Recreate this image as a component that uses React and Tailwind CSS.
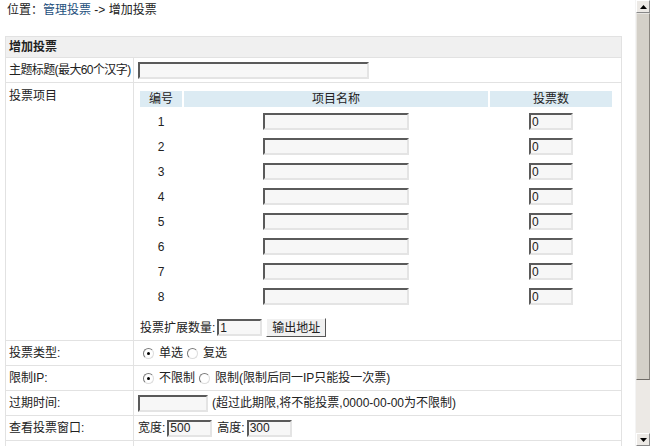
import React from "react";

const inputCls =
  "h-[17px] bg-[#f7f7f7] border-2 border-t-[#5a5a5a] border-l-[#5a5a5a] border-r-[#e4e4e4] border-b-[#e4e4e4] text-[12px] leading-[13px] px-[1px] outline-none";

const Radio = ({ checked }) => (
  <span className="inline-flex w-[11px] h-[11px] rounded-full border border-t-[#7a7a7a] border-l-[#7a7a7a] border-r-[#dcdcdc] border-b-[#dcdcdc] bg-white items-center justify-center">
    {checked && <span className="w-[3px] h-[3px] rounded-full bg-black" />}
  </span>
);

const Row = ({ label, children, h = "h-[25px]" }) => (
  <div className={`flex ${h} border-b border-[#e2e2e2]`}>
    <div className="w-[128px] shrink-0 border-r border-[#e2e2e2] pl-[3px] flex items-center whitespace-nowrap overflow-hidden">
      {label}
    </div>
    <div className="flex-1 flex items-center pl-[4px] gap-[4px] whitespace-nowrap">{children}</div>
  </div>
);

export default function App() {
  const items = [1, 2, 3, 4, 5, 6, 7, 8];
  return (
    <div
      className="flex h-[446px] w-[650px] overflow-hidden bg-white text-[12px] text-[#222]"
      style={{ fontFamily: '"Liberation Sans", "Noto Sans CJK SC", sans-serif' }}
    >
      <div className="flex-1 overflow-hidden">
        {/* breadcrumb */}
        <div className="pl-[7px] pt-[3px] h-[36px] leading-[14px]">
          位置：<span className="text-[#1d4f7c]">管理投票</span> -&gt; 增加投票
        </div>

        <div className="ml-[5px] w-[617px] border border-[#e2e2e2]">
          <div className="h-[21px] bg-[#f0f0f0] border-b border-[#e2e2e2] pl-[3px] flex items-center font-bold">
            增加投票
          </div>

          <Row label={<span className="tracking-[-0.6px]">主题标题(最大60个汉字)</span>}>
            <input className={`${inputCls} w-[231px]`} />
          </Row>

          {/* vote items */}
          <div className="flex h-[258px] border-b border-[#e2e2e2]">
            <div className="w-[128px] shrink-0 border-r border-[#e2e2e2] pl-[3px] pt-[4px]">
              投票项目
            </div>
            <div className="flex-1 pl-[6px] pr-[6px] pt-[8px]">
              <div className="grid grid-cols-[42px_304px_122px] gap-x-[2px]">
                <div className="h-[16px] bg-[#dcebf3] flex items-center justify-center">编号</div>
                <div className="h-[16px] bg-[#dcebf3] flex items-center justify-center">项目名称</div>
                <div className="h-[16px] bg-[#dcebf3] flex items-center justify-center">投票数</div>
              </div>
              <div className="pt-[2px]">
                {items.map((n) => (
                  <div key={n} className="grid grid-cols-[42px_304px_122px] gap-x-[2px] h-[25px] items-center">
                    <div className="text-center">{n}</div>
                    <div className="flex justify-center">
                      <input className={`${inputCls} w-[146px]`} />
                    </div>
                    <div className="flex justify-center">
                      <input className={`${inputCls} w-[44px]`} defaultValue="0" />
                    </div>
                  </div>
                ))}
              </div>
              <div className="flex items-center h-[21px] mt-[8px] whitespace-nowrap">
                <span>投票扩展数量:</span>
                <input className={`${inputCls} w-[45px] ml-[2px]`} defaultValue="1" />
                <button className="ml-[4px] w-[60px] h-[19px] bg-[#f0f0f0] border border-t-white border-l-white border-r-[#555] border-b-[#555] flex items-center justify-center">
                  输出地址
                </button>
              </div>
            </div>
          </div>

          <Row label="投票类型:">
            <span className="ml-[5px] flex items-center gap-[5px]">
              <Radio checked /> 单选
            </span>
            <span className="flex items-center gap-[5px]">
              <Radio /> 复选
            </span>
          </Row>

          <Row label="限制IP:">
            <span className="ml-[5px] flex items-center gap-[5px]">
              <Radio checked /> 不限制
            </span>
            <span className="flex items-center gap-[5px]">
              <Radio /> 限制(限制后同一IP只能投一次票)
            </span>
          </Row>

          <Row label="过期时间:">
            <input className={`${inputCls} w-[70px]`} />
            <span>(超过此期限,将不能投票,0000-00-00为不限制)</span>
          </Row>

          <Row label="查看投票窗口:">
            <span className="flex items-center">
              宽度:
              <input className={`${inputCls} w-[45px] ml-[2px]`} defaultValue="500" />
            </span>
            <span className="flex items-center ml-[1px]">
              高度:
              <input className={`${inputCls} w-[45px] ml-[2px]`} defaultValue="300" />
            </span>
          </Row>

          <Row label="">
            <span />
          </Row>
        </div>
      </div>

      {/* scrollbar */}
      <div className="w-[15px] shrink-0 flex flex-col bg-[#ece9e5] border-l border-[#f4f4f4]">
        <div className="h-[13px] bg-[#ece9e5] border border-t-white border-l-white border-r-[#888] border-b-[#888] flex items-center justify-center">
          <svg width="7" height="4" viewBox="0 0 7 4"><path d="M3.5 0L7 4H0z" fill="#000" /></svg>
        </div>
        <div className="h-[367px] bg-[#d4d0c8] border border-t-[#e8e6e2] border-l-[#e8e6e2] border-r-[#8a8680] border-b-[#6f6b66]" />
        <div className="flex-1" />
        <div className="h-[13px] bg-[#ece9e5] border border-t-white border-l-white border-r-[#888] border-b-[#888] flex items-center justify-center">
          <svg width="7" height="4" viewBox="0 0 7 4"><path d="M0 0H7L3.5 4z" fill="#000" /></svg>
        </div>
      </div>
    </div>
  );
}
